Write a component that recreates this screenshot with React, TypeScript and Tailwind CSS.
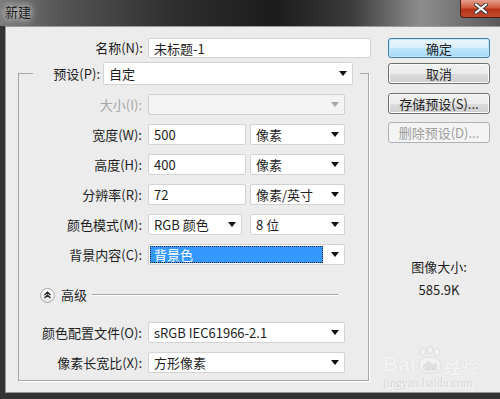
import React from "react";

const font = "font-['Noto_Sans_CJK_SC','Microsoft_YaHei',sans-serif]";

function Arrow({ disabled }: { disabled?: boolean }) {
  return (
    <svg width="8" height="5" viewBox="0 0 8 5" className="shrink-0">
      <path d="M0 0H8L4 5Z" fill={disabled ? "#a8a8a8" : "#111"} />
    </svg>
  );
}

function Field({ w, value, h = "h-[21px]" }: { w: string; value: string; h?: string }) {
  return (
    <div className={`${w} ${h} bg-white border border-[#d3d3d3] rounded-[2px] pl-[5px] flex items-center leading-none`}>
      {value}
    </div>
  );
}

function Select({
  w,
  value,
  disabled,
  selected,
  h = "h-[21px]",
}: {
  w: string;
  value?: string;
  disabled?: boolean;
  selected?: boolean;
  h?: string;
}) {
  return (
    <div
      className={`${w} ${h} border rounded-[2px] flex items-center pr-[5px] leading-none ${
        disabled ? "bg-[#f3f3f3] border-[#d0d0d0]" : "bg-white border-[#d3d3d3]"
      }`}
    >
      {selected ? (
        <div className="flex-1 h-[17px] ml-[1px] mr-[8px] bg-[#3399ff] outline-1 outline-dotted outline-[#222] -outline-offset-1 text-white pl-[4px] flex items-center">
          {value}
        </div>
      ) : (
        <div className="flex-1 pl-[5px]">{value}</div>
      )}
      <Arrow disabled={disabled} />
    </div>
  );
}

function Row({ label, disabled, children }: { label: string; disabled?: boolean; children: React.ReactNode }) {
  return (
    <div className="flex items-center h-[21px]">
      <div className={`w-[124px] text-right pr-[1px] ${disabled ? "text-[#a6a6a6]" : ""}`}>{label}</div>
      <div className="ml-[5px] flex items-center gap-[4px]">{children}</div>
    </div>
  );
}

function Btn({ children, primary, disabled, h = "h-[21px]" }: { children: React.ReactNode; primary?: boolean; disabled?: boolean; h?: string }) {
  const look = primary
    ? "border-[#3c7fb1] bg-[linear-gradient(#eaf6fd_0%,#d9f0fc_50%,#bee6fd_51%,#a7d9f5_100%)] shadow-[inset_0_0_0_1px_#c6e6f8]"
    : disabled
    ? "border-[#adb2b5] bg-[#f4f4f4] text-[#9d9d9d]"
    : "border-[#707070] bg-[linear-gradient(#f2f2f2_0%,#ebebeb_50%,#dddddd_51%,#cfcfcf_100%)] shadow-[inset_0_0_0_1px_#fbfbfb]";
  return (
    <div className={`w-[102px] ${h} border rounded-[3px] flex items-center justify-center leading-none ${look}`}>
      {children}
    </div>
  );
}

function TitleBar() {
  return (
    <div className="h-[26px] shrink-0 flex items-start bg-[linear-gradient(90deg,#7c7c7c_0%,#555_12%,#2e2e2e_35%,#1c1c1c_55%,#3a3a3a_70%,#8d8d8d_84%,#5a5a5a_100%)]">
      <div className="pl-[5px] pt-[5px] text-[13px] leading-none text-[#1a1a1a] [text-shadow:0_0_6px_#eee,0_0_10px_#ccc]">
        新建
      </div>
      <div className="ml-auto w-[40px] h-[18px] rounded-bl-[4px] border-l border-b border-[#4a1c12] bg-[linear-gradient(#e6a08e_0%,#cf5a3e_45%,#b8321a_55%,#c24a2c_100%)] flex items-center justify-center">
        <svg width="14" height="11" viewBox="0 0 14 11">
          <path d="M2 1.5L12 9.5M12 1.5L2 9.5" stroke="#3b3b3b" strokeWidth="4" strokeLinecap="round" />
          <path d="M2 1.5L12 9.5M12 1.5L2 9.5" stroke="#fff" strokeWidth="2.2" strokeLinecap="round" />
        </svg>
      </div>
    </div>
  );
}

function Watermark() {
  return (
    <div className="mt-[48px] -ml-[5px] text-[#f3f3f3] font-['Liberation_Sans',sans-serif] [text-shadow:0_0_1px_#d0d0d0] select-none">
      <div className="flex items-end h-[28px]">
        <span className="text-[21px] font-bold leading-none">Bai</span>
        <svg width="30" height="28" viewBox="0 0 30 28" className="-mx-[1px]">
          <g fill="#f2f2f2" stroke="#d8d8d8" strokeWidth="0.8">
            <ellipse cx="8" cy="6" rx="3" ry="3.5" />
            <ellipse cx="15" cy="4" rx="3" ry="3.5" />
            <ellipse cx="22" cy="6" rx="3" ry="3.5" />
            <path d="M4 20C4 14 9 11 15 11C21 11 26 14 26 20C26 25 22 27 15 27C8 27 4 25 4 20Z" />
          </g>
          <text x="15" y="24" textAnchor="middle" fontSize="11" fontWeight="bold" fill="#fafafa" stroke="#d8d8d8" strokeWidth="0.5" fontFamily="Liberation Sans, sans-serif">
            du
          </text>
        </svg>
        <span className={`text-[17px] font-bold leading-none ${font}`}>经验</span>
      </div>
      <div className="mt-[3px] text-[12px] leading-none font-['Liberation_Serif',serif] text-[#d6d6d6] [text-shadow:1px_1px_0_#fafafa]">
        jingyan.baidu.com
      </div>
    </div>
  );
}

export default function App() {
  return (
    <div className={`w-[500px] h-[399px] overflow-hidden flex flex-col bg-[#2c2c2c] ${font} text-[13px] text-[#1e1e1e]`}>
      <TitleBar />
      <div className="flex-1 min-h-0 pl-[5px] pb-[6px] bg-[#333]">
        <div className="h-full bg-[#ececec] border-l border-t border-b border-[#9a9a9a] flex">
          {/* left: fields */}
          <div className="w-[370px] pt-[11px]">
            <div className="flex items-center h-[20px]">
              <div className="w-[137px] text-right">名称(N):</div>
              <div className="ml-[5px]">
                <Field w="w-[223px]" h="h-[20px]" value="未标题-1" />
              </div>
            </div>

            <fieldset className="mt-[4px] ml-[12px] w-[351px] border border-[#a6a6a6] shadow-[1px_1px_0_#fff] pb-[7px]">
              <legend className="ml-[14px] pr-[7px] flex items-center h-[23px]">
                <div className="w-[67px] text-right">预设(P):</div>
                <div className="ml-[3px]">
                  <Select w="w-[250px]" h="h-[23px]" value="自定" />
                </div>
              </legend>

              <div className="mt-[9px] flex flex-col gap-[9px]">
                <Row label="大小(I):" disabled>
                  <Select w="w-[197px]" disabled />
                </Row>
                <Row label="宽度(W):">
                  <Field w="w-[98px]" value="500" />
                  <Select w="w-[95px]" value="像素" />
                </Row>
                <Row label="高度(H):">
                  <Field w="w-[98px]" value="400" />
                  <Select w="w-[95px]" value="像素" />
                </Row>
                <Row label="分辨率(R):">
                  <Field w="w-[98px]" value="72" />
                  <Select w="w-[95px]" value="像素/英寸" />
                </Row>
                <Row label="颜色模式(M):">
                  <Select w="w-[94px]" value="RGB 颜色" />
                  <div className="ml-[4px]">
                    <Select w="w-[95px]" value="8 位" />
                  </div>
                </Row>
                <Row label="背景内容(C):">
                  <Select w="w-[197px]" value="背景色" selected />
                </Row>
              </div>

              <div className="mt-[22px] h-[16px] flex items-center pl-[21px]">
                <div className="w-[15px] h-[15px] rounded-full border border-[#a9a9a9] bg-[linear-gradient(#fff,#e6e6e6)] flex items-center justify-center">
                  <svg width="9" height="8" viewBox="0 0 9 8">
                    <path d="M1.5 4L4.5 1.3L7.5 4M1.5 7L4.5 4.3L7.5 7" fill="none" stroke="#222" strokeWidth="1.4" />
                  </svg>
                </div>
                <span className="ml-[6px]">高级</span>
                <div className="ml-[5px] w-[246px] h-[2px] border-t border-[#a6a6a6] border-b border-b-white" />
              </div>

              <div className="mt-[19px] flex flex-col gap-[9px]">
                <Row label="颜色配置文件(O):">
                  <Select w="w-[197px]" value="sRGB IEC61966-2.1" />
                </Row>
                <Row label="像素长宽比(X):">
                  <Select w="w-[197px]" value="方形像素" />
                </Row>
              </div>
            </fieldset>
          </div>

          {/* right: buttons and size */}
          <div className="pl-[12px] pt-[11px] flex flex-col">
            <Btn primary h="h-[20px]">确定</Btn>
            <div className="mt-[5px]">
              <Btn>取消</Btn>
            </div>
            <div className="mt-[9px]">
              <Btn>存储预设(S)...</Btn>
            </div>
            <div className="mt-[8px]">
              <Btn disabled>删除预设(D)...</Btn>
            </div>
            <div className="w-[102px] text-center mt-[116px] leading-[16px]">图像大小:</div>
            <div className="w-[102px] text-center mt-[7px] leading-[16px]">585.9K</div>
            <Watermark />
          </div>
        </div>
      </div>
    </div>
  );
}
